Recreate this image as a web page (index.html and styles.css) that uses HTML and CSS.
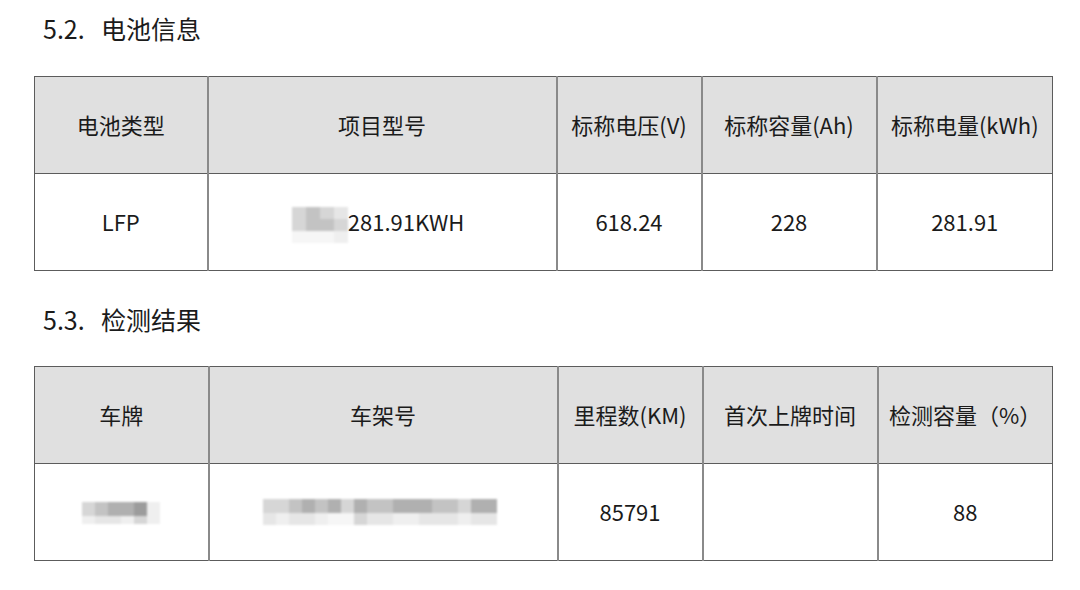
FILE: index.html
```html
<!DOCTYPE html>
<html lang="zh">
<head>
<meta charset="utf-8">
<link rel="stylesheet" href="styles.css">
</head>
<body>
<div class="page">
  <h2 class="sec sec-first"><span class="num">5.2.</span>电池信息</h2>
  <table class="grid">
    <colgroup><col class="c1"><col class="c2"><col class="c3"><col class="c4"><col class="c5"></colgroup>
    <tr class="head"><td>电池类型</td><td>项目型号</td><td>标称电压(V)</td><td>标称容量(Ah)</td><td>标称电量(kWh)</td></tr>
    <tr><td>LFP</td><td><span class="model"><span class="mosaic mz-model"><span class="mr"><i class="g1"></i><i class="g2"></i><i class="g1"></i><i class="g0"></i></span><span class="mr"><i class="g1"></i><i class="g2"></i><i class="g2"></i><i class="g1"></i></span><span class="mr"><i class="g0c"></i><i class="g0c"></i><i class="g0c"></i><i class="g0b"></i></span></span><span class="mtext">281.91KWH</span></span></td><td>618.24</td><td>228</td><td>281.91</td></tr>
  </table>
  <h2 class="sec sec-second"><span class="num">5.3.</span>检测结果</h2>
  <table class="grid">
    <colgroup><col class="d1"><col class="d2"><col class="c3"><col class="c4"><col class="d5"></colgroup>
    <tr class="head"><td>车牌</td><td>车架号</td><td>里程数(KM)</td><td>首次上牌时间</td><td>检测容量（%）</td></tr>
    <tr><td><span class="mosaic mz-plate"><span class="mr tall"><i class="g1"></i><i class="g2"></i><i class="g3"></i><i class="g3"></i><i class="g4"></i><i class="g0b"></i></span><span class="mr short"><i class="g0b"></i><i class="g0"></i><i class="g0"></i><i class="g0b"></i><i class="g1"></i><i class="g0b"></i></span></span></td>
      <td><span class="mosaic mz-vin"><span class="mr tall"><i class="g1"></i><i class="g1"></i><i class="g2"></i><i class="g3"></i><i class="g2"></i><i class="g3"></i><i class="g1"></i><i class="g3"></i><i class="g2"></i><i class="g2"></i><i class="g3"></i><i class="g3"></i><i class="g3"></i><i class="g2"></i><i class="g2"></i><i class="g1"></i><i class="g3"></i><i class="g3"></i></span><span class="mr short"><i class="g0"></i><i class="g0b"></i><i class="g0"></i><i class="g0"></i><i class="g0b"></i><i class="g0c"></i><i class="g0c"></i><i class="g1"></i><i class="g0"></i><i class="g0"></i><i class="g0b"></i><i class="g0b"></i><i class="g0"></i><i class="g0"></i><i class="g0"></i><i class="g0b"></i><i class="g0"></i><i class="g0"></i></span></span></td>
      <td>85791</td><td></td><td>88</td></tr>
  </table>
</div>
</body>
</html>
```
FILE: styles.css
```css
* { box-sizing: border-box; }
html, body { margin: 0; padding: 0; background: #fff; }
body {
  font-family: "Noto Sans CJK SC", "Liberation Sans", sans-serif;
  color: #1b1b1b;
  width: 1080px;
  height: 590px;
  overflow: hidden;
}
.page { padding-left: 34px; width: 1052px; }
.sec {
  margin: 0;
  height: 56px;
  line-height: 56px;
  font-size: 25px;
  font-weight: 400;
  padding-left: 9px;
  display: flex;
  align-items: center;
}
.sec .num { width: 58px; }
.sec-first { margin-bottom: 20px; }
.sec-second { margin-top: 20px; margin-bottom: 19px; }
.grid {
  width: 1018px;
  border-collapse: collapse;
  table-layout: fixed;
  font-size: 22px;
}
.grid td {
  height: 97px;
  text-align: center;
  vertical-align: middle;
  border: 1px solid #5c5c5c;
  border-left: 2px solid #8a8a8a;
  padding: 0 0 3px 0;
  line-height: 1;
}
.grid td:first-child { border-left: 1px solid #5c5c5c; }
.grid td:last-child { border-right: 1px solid #5c5c5c; }
.grid .head td { background: #e0e0e0; }
.c1 { width: 173px; } .c2 { width: 349px; } .c3 { width: 145px; } .c4 { width: 175px; } .c5 { width: 176px; }
.d1 { width: 174px; } .d2 { width: 349px; } .d5 { width: 175px; }
.model { display: inline-flex; align-items: flex-start; margin-left: -8px; vertical-align: middle; padding-top: 8px; }
.mtext { margin-top: 3px; }
.mosaic { display: inline-flex; flex-direction: column; vertical-align: middle; filter: blur(1px); }
.mr { display: flex; }
.mr i { display: block; width: 13px; height: 12px; }
.mz-model .mr i { width: 14px; height: 12px; }
.mz-vin { margin-left: -6px; }
.mz-plate .mr.tall i { height: 14px; }
.mz-plate .mr.short i { height: 8px; }
.mz-vin .mr i { width: 13px; }
.mz-vin .mr.tall i { height: 14px; }
.mz-vin .mr.short i { height: 12px; }
.g0c { background: #f6f6f6; }
.g0b { background: #efefef; }
.g0 { background: #e6e6e6; }
.g1 { background: #d6d6d6; }
.g2 { background: #c3c3c3; }
.g3 { background: #b0b0b0; }
.g4 { background: #9c9c9c; }
```
